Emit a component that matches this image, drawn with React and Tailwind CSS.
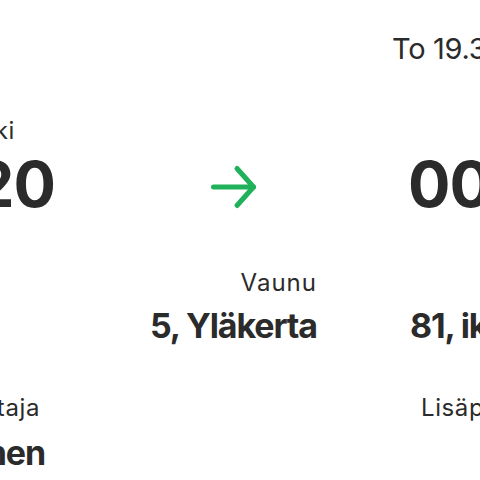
export default function App() {
  const cols = 'grid grid-cols-[55px_262px_163px]';

  return (
    <div className="w-[480px] h-[480px] overflow-hidden bg-white text-[#2b2b2b] font-['Inter','Noto_Sans',sans-serif]">
      {/* date */}
      <div className={`${cols} pt-[34px]`}>
        <div />
        <div />
        <div className="pl-[75px] whitespace-nowrap text-[29px] leading-none tracking-[-0.3px]">To 19.3.2025</div>
      </div>

      {/* stations */}
      <div className={`${cols} mt-[56px]`}>
        <div className="flex justify-end pr-[40px] whitespace-nowrap text-[24px] leading-none tracking-[0.6px]">Helsinki</div>
        <div />
        <div className="pl-[190px] whitespace-nowrap text-[24px] leading-none">Rovaniemi</div>
      </div>

      {/* times */}
      <div className={`${cols} mt-[10px] items-start`}>
        <div className="flex justify-end whitespace-nowrap text-[63px] font-bold leading-none tracking-[-1px]">7.20</div>
        <div className="pl-[153px] pt-[9px]">
          <svg width="52" height="50" viewBox="0 0 52 50" fill="none" stroke="#1fb25a" strokeWidth="5" strokeLinecap="round" strokeLinejoin="round">
            <path d="M5.5 25H45.5" />
            <path d="M29 6.5L45.5 25L29 43.5" />
          </svg>
        </div>
        <div className="pl-[91px] whitespace-nowrap text-[63px] font-bold leading-none tracking-[-1px]">00.05</div>
      </div>

      {/* wagon / seat */}
      <div className={`${cols} mt-[55px]`}>
        <div />
        <div className="text-right whitespace-nowrap text-[24px] leading-none tracking-[1px]">Vaunu</div>
        <div />
      </div>

      <div className={`${cols} mt-[14px]`}>
        <div />
        <div className="text-right whitespace-nowrap text-[34px] font-bold leading-none tracking-[-1.1px]">5, Yläkerta</div>
        <div className="pl-[93px] whitespace-nowrap text-[34px] font-bold leading-none tracking-[-1.1px]">81, ikkuna</div>
      </div>

      {/* passenger */}
      <div className={`${cols} mt-[53px]`}>
        <div className="flex justify-end pr-[15px] whitespace-nowrap text-[24px] leading-none tracking-[0.6px]">Matkustaja</div>
        <div />
        <div className="pl-[104px] whitespace-nowrap text-[24px] leading-none tracking-[0.6px]">Lisäpalvelut</div>
      </div>

      <div className={`${cols} mt-[16px]`}>
        <div className="flex justify-end pr-[10px] whitespace-nowrap text-[34px] font-bold leading-none tracking-[-1.1px]">Matti Virtanen</div>
        <div />
        <div />
      </div>
    </div>
  );
}
